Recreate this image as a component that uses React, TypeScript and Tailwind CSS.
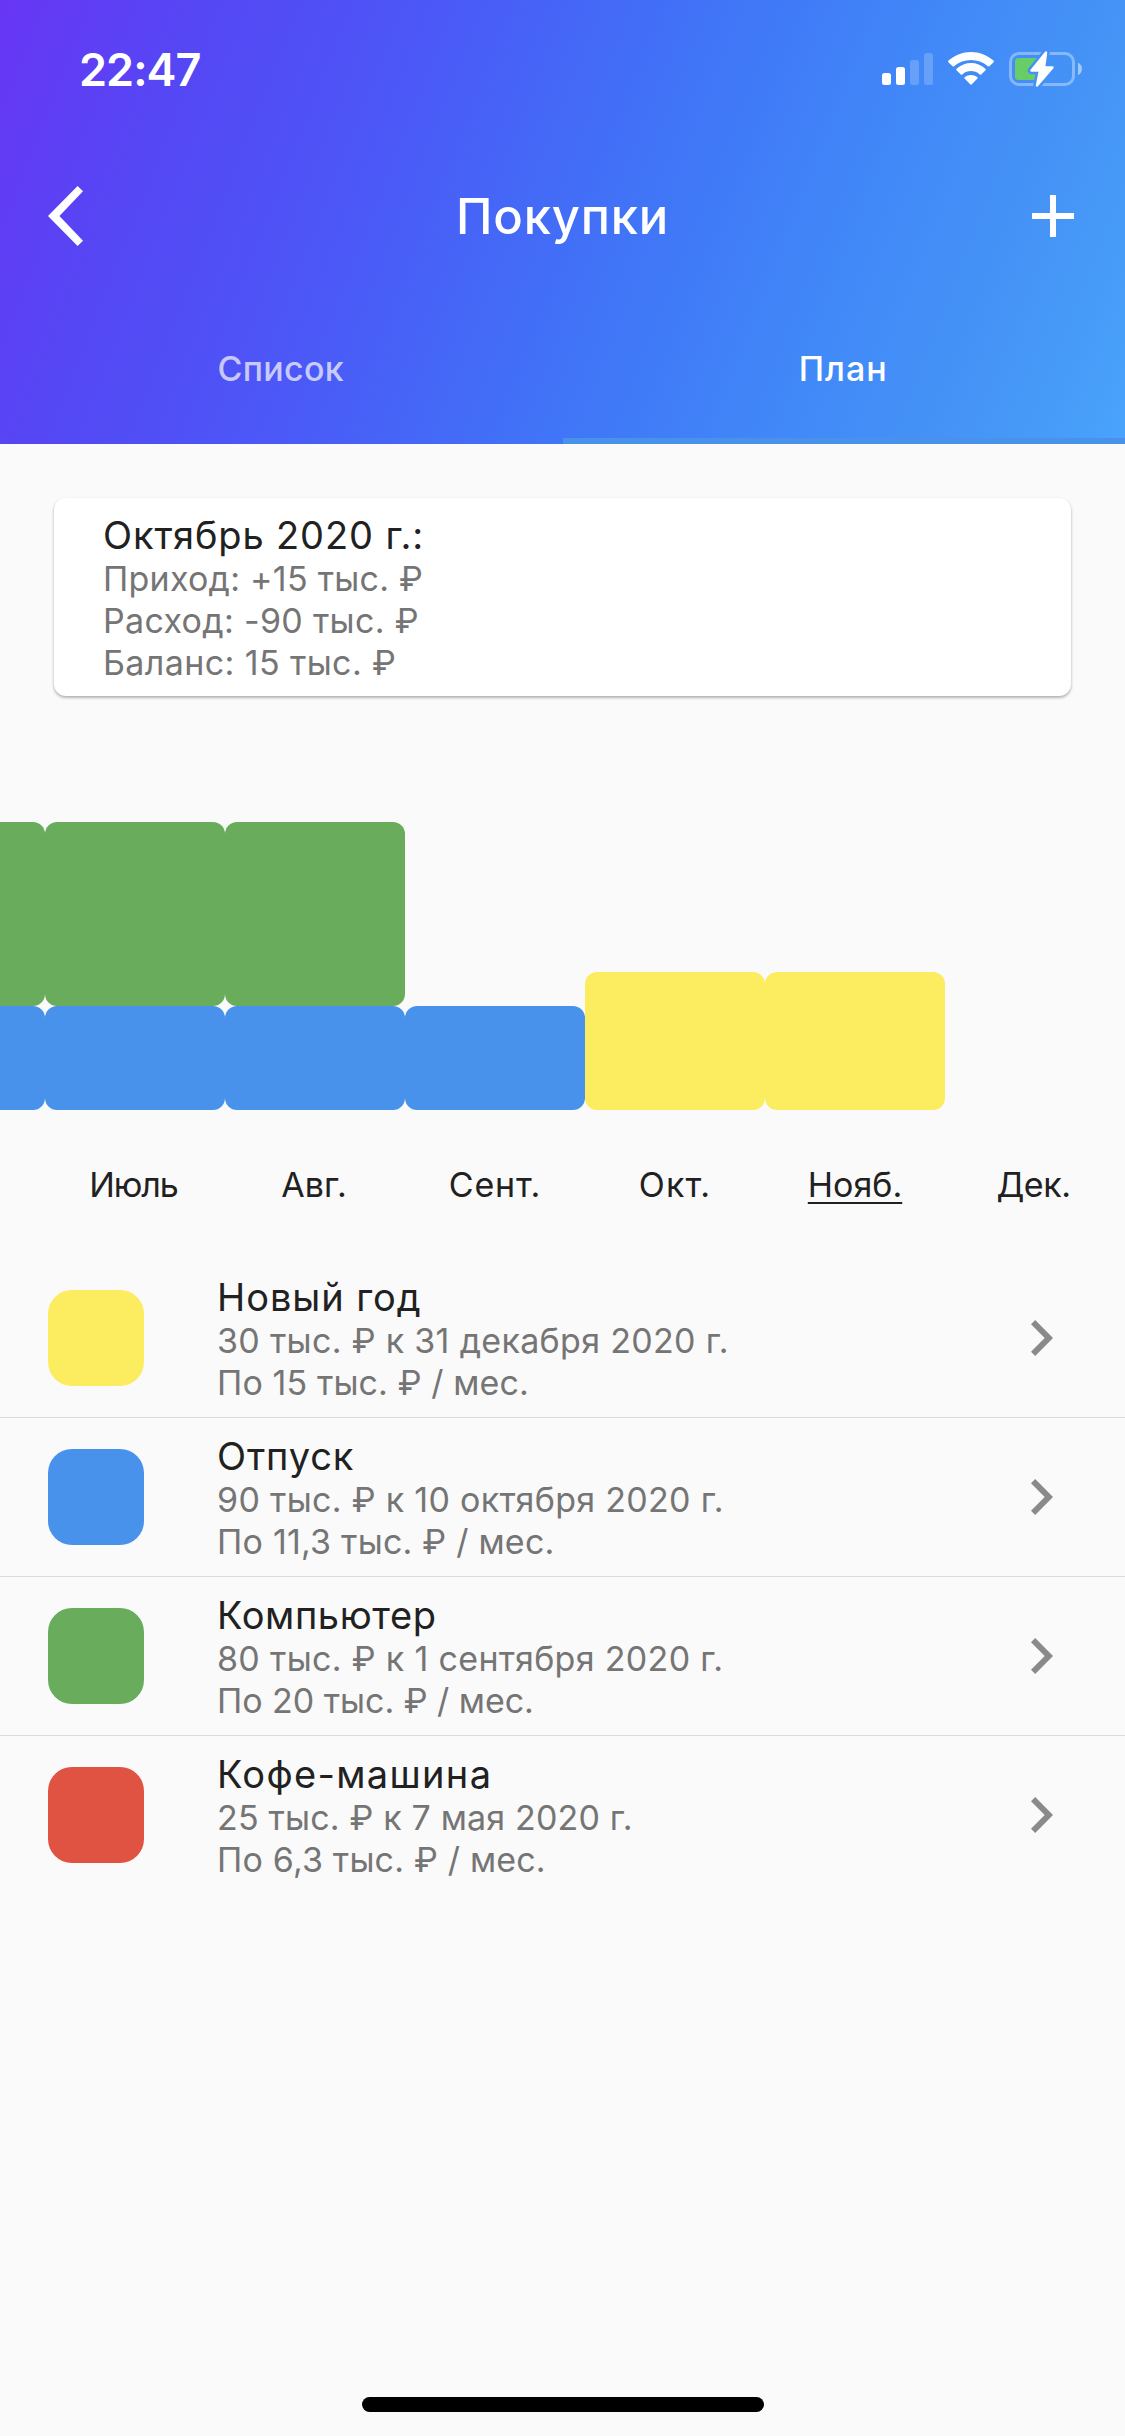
type Line = { text: string; tracking: string };

type Goal = {
  swatch: string;
  title: Line;
  target: Line;
  monthly: Line;
};

const summary: Line[] = [
  { text: "Приход: +15 тыс. ₽", tracking: "tracking-[0.25px]" },
  { text: "Расход: -90 тыс. ₽", tracking: "tracking-[0.32px]" },
  { text: "Баланс: 15 тыс. ₽", tracking: "tracking-[0.39px]" },
];

const goals: Goal[] = [
  {
    swatch: "bg-[#fcec60]",
    title: { text: "Новый год", tracking: "tracking-[0.93px]" },
    target: { text: "30 тыс. ₽ к 31 декабря 2020 г.", tracking: "tracking-[0.31px]" },
    monthly: { text: "По 15 тыс. ₽ / мес.", tracking: "tracking-[0.11px]" },
  },
  {
    swatch: "bg-[#4992ec]",
    title: { text: "Отпуск", tracking: "tracking-[0.87px]" },
    target: { text: "90 тыс. ₽ к 10 октября 2020 г.", tracking: "tracking-[0.3px]" },
    monthly: { text: "По 11,3 тыс. ₽ / мес.", tracking: "tracking-[0.22px]" },
  },
  {
    swatch: "bg-[#69ad5c]",
    title: { text: "Компьютер", tracking: "tracking-[0.61px]" },
    target: { text: "80 тыс. ₽ к 1 сентября 2020 г.", tracking: "tracking-[0.32px]" },
    monthly: { text: "По 20 тыс. ₽ / мес.", tracking: "tracking-[-0.04px]" },
  },
  {
    swatch: "bg-[#e05241]",
    title: { text: "Кофе-машина", tracking: "tracking-[1.32px]" },
    target: { text: "25 тыс. ₽ к 7 мая 2020 г.", tracking: "tracking-[0.17px]" },
    monthly: { text: "По 6,3 тыс. ₽ / мес.", tracking: "tracking-[0.18px]" },
  },
];

const GREEN = "h-[184px] bg-[#69ad5c]";
const BLUE = "h-[104px] bg-[#4992ec]";
const YELLOW = "h-[138px] bg-[#fcec60]";

const columns: string[][] = [[GREEN, BLUE], [GREEN, BLUE], [GREEN, BLUE], [BLUE], [YELLOW], [YELLOW], []];

const months: (Line & { current?: boolean })[] = [
  { text: "Июль", tracking: "tracking-[-1.08px] pr-[3px]" },
  { text: "Авг.", tracking: "tracking-[0.11px] pr-[2px]" },
  { text: "Сент.", tracking: "tracking-[0.83px]" },
  { text: "Окт.", tracking: "tracking-[1.12px]" },
  { text: "Нояб.", tracking: "tracking-normal", current: true },
  { text: "Дек.", tracking: "tracking-[-0.47px] pr-[3px]" },
];

function StatusIcons() {
  return (
    <svg className="h-[42px] w-[204px]" viewBox="880 48 204 42" fill="#fff" aria-hidden="true">
      <rect x="882" y="73" width="9" height="12" rx="2.5" />
      <rect x="896" y="67" width="9" height="18" rx="2.5" />
      <rect x="910" y="60" width="9" height="25" rx="2.5" opacity="0.2" />
      <rect x="924" y="53" width="9" height="32" rx="2.5" opacity="0.2" />
      {/* wifi */}
      <path d="M948.4 62.2 Q947.7 61.5 948.5 60.6 C961 49 981 49 993.5 60.6 Q994.3 61.5 993.6 62.2 L989.4 66.2 Q988.7 66.9 987.9 66.2 C978.5 58 963.5 58 954.1 66.2 Q953.3 66.9 952.6 66.2 Z" />
      <path d="M956.5 70.3 Q955.8 69.6 956.6 68.8 C965 61.2 977 61.2 985.4 68.8 Q986.2 69.6 985.5 70.3 L981.2 74.4 Q980.5 75 979.7 74.4 C974.5 70 967.5 70 962.3 74.4 Q961.5 75 960.8 74.4 Z" />
      <path d="M964.6 78.5 Q963.9 77.7 964.8 77 C968.5 74.2 973.5 74.2 977.2 77 Q978.1 77.7 977.4 78.5 L971.8 84.3 Q971 85 970.2 84.3 Z" />
      {/* battery with a gap cut around the bolt */}
      <mask id="bolt-gap" maskUnits="userSpaceOnUse" x="1000" y="40" width="90" height="60">
        <rect x="1000" y="40" width="90" height="60" fill="#fff" />
        <path
          d="M1046 52.5 L1031.5 70.5 H1040 L1037 85.5 L1052.5 67.5 H1044 Z"
          fill="#000"
          stroke="#000"
          strokeWidth="7.5"
          strokeLinejoin="round"
        />
      </mask>
      <g mask="url(#bolt-gap)">
        <rect x="1010.5" y="53.5" width="63" height="31" rx="8.5" fill="none" stroke="#fff" strokeWidth="3" opacity="0.36" />
        <rect x="1015" y="58" width="26" height="22" rx="3.5" fill="#67ce67" />
      </g>
      <path d="M1078 62.8 C1083.3 65 1083.3 73 1078 75.2 Z" opacity="0.5" />
      <path
        d="M1046 52.5 L1031.5 70.5 H1040 L1037 85.5 L1052.5 67.5 H1044 Z"
        stroke="#fff"
        strokeWidth="2.5"
        strokeLinejoin="round"
      />
    </svg>
  );
}

export default function App() {
  return (
    <div className="flex h-[2436px] w-[1125px] flex-col overflow-hidden bg-[#fafafa] font-['Inter','Noto_Sans',sans-serif] text-[#212121]">
      <header className="h-[444px] shrink-0 bg-[linear-gradient(111.54deg,#6836f5_0%,#5547f4_16%,#4c57f7_33%,#4567f7_45%,#4075f7_56%,#4189f8_74%,#4594f6_87%,#49a3fb_100%)] text-white">
        <div className="flex h-[138px] items-center justify-between pr-[41px] pl-[79px]">
          <span className="text-[45px] leading-none font-semibold tracking-[-0.95px]">22:47</span>
          <StatusIcons />
        </div>

        <div className="grid h-[156px] grid-cols-[1fr_auto_1fr] items-center px-[48px]">
          <svg className="h-[60px] w-[35px]" viewBox="0 0 35 60" fill="#fff" aria-hidden="true">
            <path d="M29.6 0 L35 5.2 L11.4 30 L35 54.8 L29.6 60 L0 30 Z" />
          </svg>
          <h1 className="pt-[2px] text-[49px] leading-[60px] font-medium tracking-[0.79px]">Покупки</h1>
          <svg className="mr-[3px] h-[42px] w-[42px] justify-self-end" viewBox="0 0 42 42" fill="#fff" aria-hidden="true">
            <path d="M18 0h6v18h18v6H24v18h-6V24H0v-6h18z" />
          </svg>
        </div>

        <nav className="grid h-[150px] grid-cols-2 text-[34px] font-medium">
          <div className="flex items-center justify-center pr-[1px] pb-[2px] text-white/70">
            <span className="tracking-[0.3px]">Список</span>
          </div>
          <div className="relative flex items-center justify-center pr-[1px] pb-[2px]">
            <span className="tracking-[1px]">План</span>
            <span className="absolute inset-x-0 bottom-0 h-[6px] bg-[#4992ec]" />
          </div>
        </nav>
      </header>

      <section className="mx-[54px] mt-[54px] h-[198px] shrink-0 rounded-[12px] bg-white pt-[14px] pl-[49px] shadow-[0_2px_3px_rgba(0,0,0,0.22),0_1px_3px_rgba(0,0,0,0.12)]">
        <h2 className="text-[38px] leading-[46px] tracking-[0.87px]">Октябрь 2020 г.:</h2>
        {summary.map((line) => (
          <p key={line.text} className={`text-[34px] leading-[42px] text-[#757575] ${line.tracking}`}>
            {line.text}
          </p>
        ))}
      </section>

      <section className="mt-[126px] shrink-0">
        <div className="-ml-[135px] flex h-[288px] items-end">
          {columns.map((blocks, i) => (
            <div key={i} className="flex w-[180px] shrink-0 flex-col">
              {blocks.map((block) => (
                <div key={block} className={`rounded-[12px] ${block}`} />
              ))}
            </div>
          ))}
        </div>
        <div className="mt-[54px] ml-[45px] flex text-[34px] leading-[42px]">
          {months.map((m) => (
            <div key={m.text} className="w-[180px] shrink-0 text-center">
              <span
                className={`${m.tracking} ${
                  m.current ? "underline decoration-[2px] underline-offset-[5px] [text-decoration-skip-ink:none]" : ""
                }`}
              >
                {m.text}
              </span>
            </div>
          ))}
        </div>
      </section>

      <ul className="mt-[53px] flex flex-col divide-y divide-[#dcdcdc]">
        {goals.map((goal) => (
          <li key={goal.title.text} className="flex h-[159px] items-start pr-[72px] pl-[48px] last:h-[158px]">
            <div className={`mt-[31px] h-[96px] w-[96px] shrink-0 rounded-[24px] ${goal.swatch}`} />
            <div className="ml-[73px] flex-1 pt-[15px] whitespace-nowrap">
              <h3 className={`text-[38px] leading-[46px] ${goal.title.tracking}`}>{goal.title.text}</h3>
              <p className={`text-[34px] leading-[42px] text-[#757575] ${goal.target.tracking}`}>{goal.target.text}</p>
              <p className={`text-[34px] leading-[42px] text-[#757575] ${goal.monthly.tracking}`}>{goal.monthly.text}</p>
            </div>
            <svg className="mt-[61px] h-[36px] w-[22px]" viewBox="0 0 22 36" fill="#8a8a8a" aria-hidden="true">
              <path d="M4.2 0 L22 18 L4.2 36 L0 31.8 L13.7 18 L0 4.2 Z" />
            </svg>
          </li>
        ))}
      </ul>

      <div className="mt-auto mb-[24px] h-[15px] w-[402px] shrink-0 self-center rounded-full bg-black" />
    </div>
  );
}
